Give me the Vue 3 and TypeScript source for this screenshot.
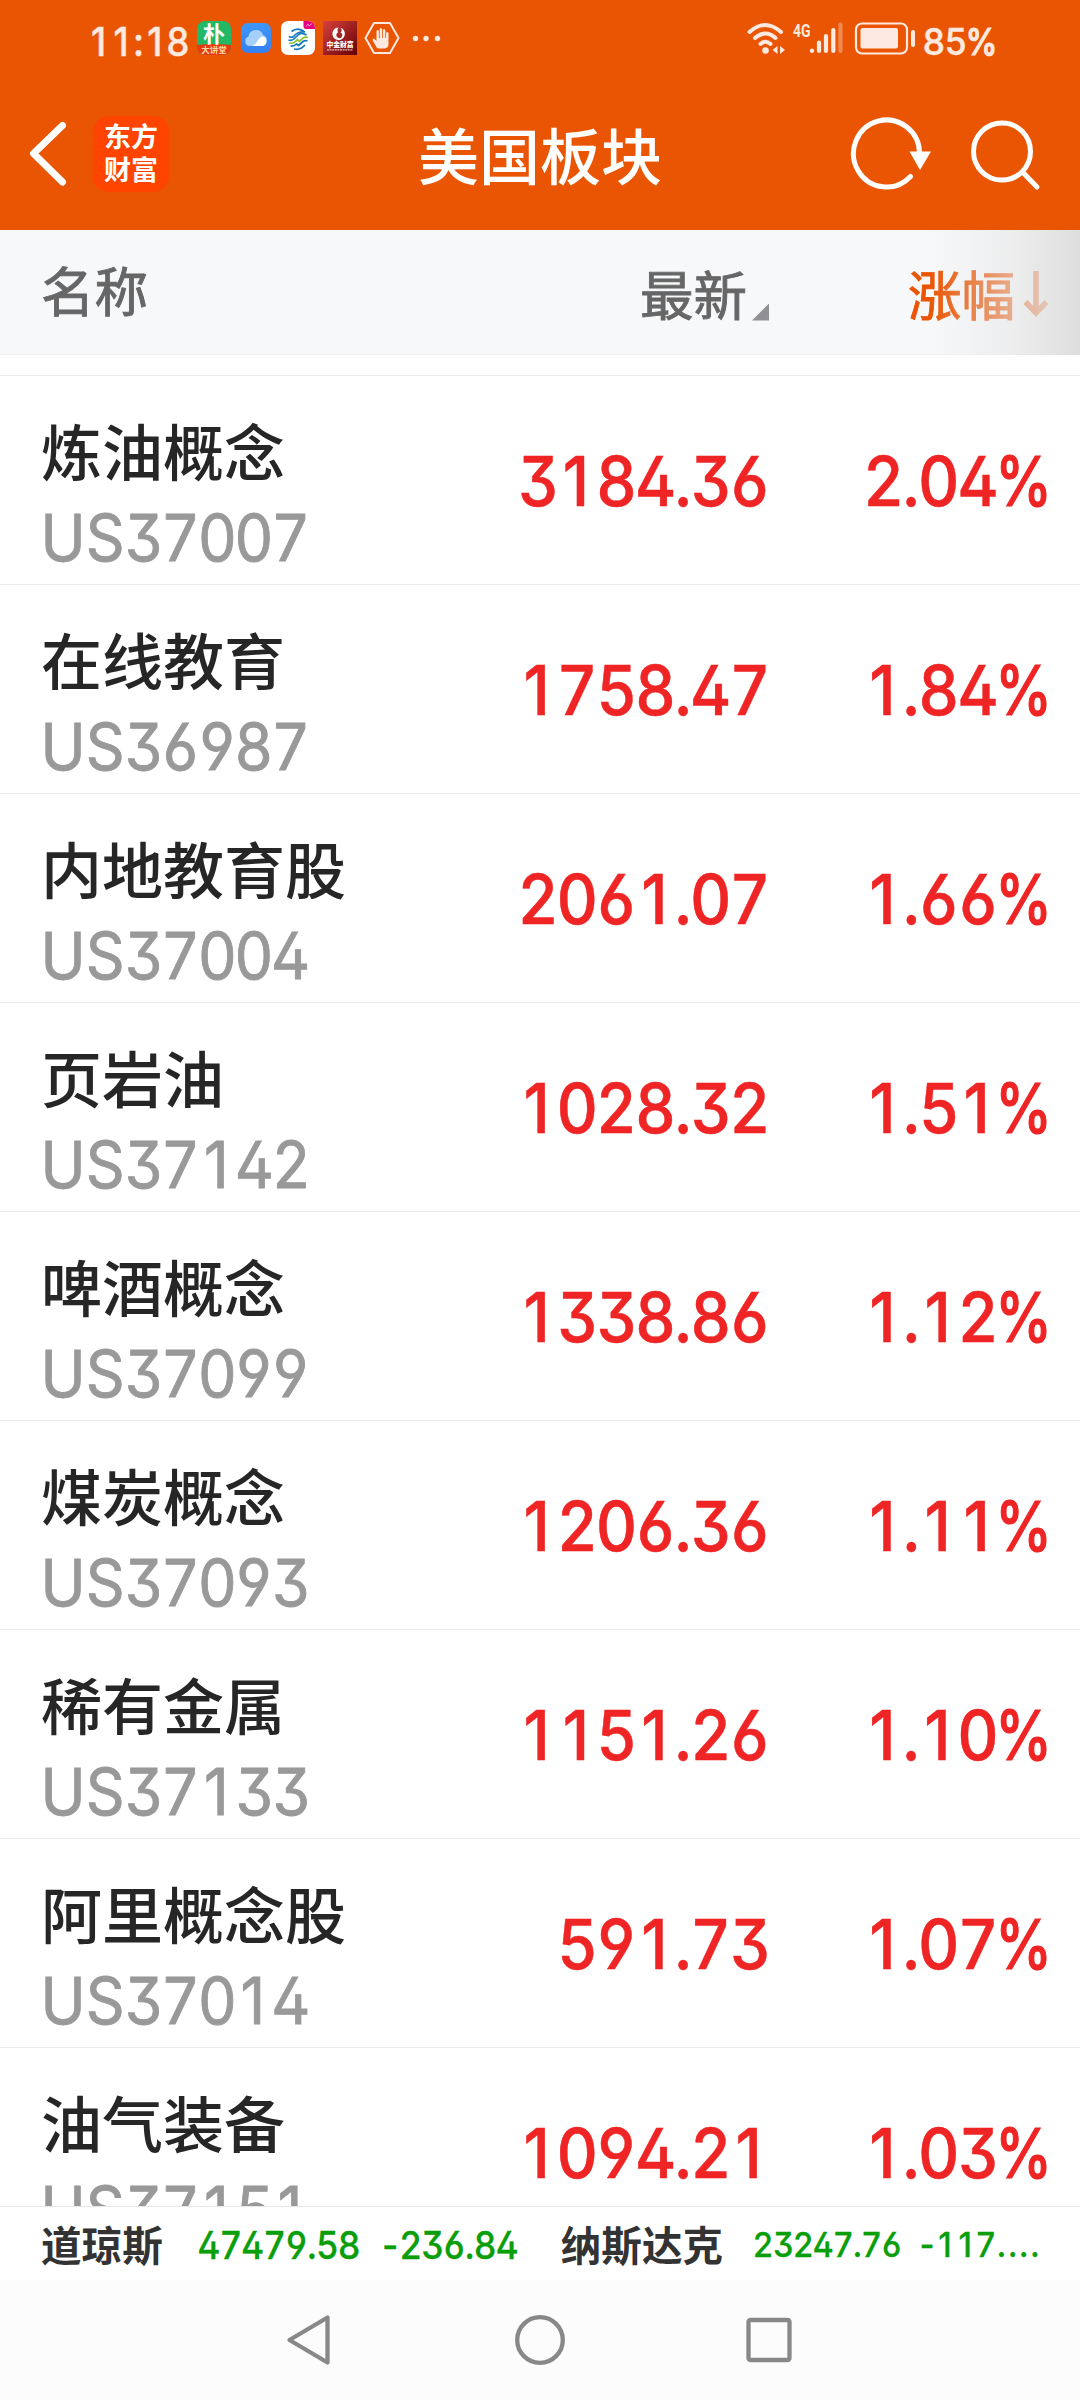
<script setup lang="ts">
import { h, type FunctionalComponent } from 'vue'

interface Sector {
  name: string
  code: string
  price: string
  change: string
}

const sectors: Sector[] = [
  { name: '炼油概念', code: 'US37007', price: '3184.36', change: '2.04%' },
  { name: '在线教育', code: 'US36987', price: '1758.47', change: '1.84%' },
  { name: '内地教育股', code: 'US37004', price: '2061.07', change: '1.66%' },
  { name: '页岩油', code: 'US37142', price: '1028.32', change: '1.51%' },
  { name: '啤酒概念', code: 'US37099', price: '1338.86', change: '1.12%' },
  { name: '煤炭概念', code: 'US37093', price: '1206.36', change: '1.11%' },
  { name: '稀有金属', code: 'US37133', price: '1151.26', change: '1.10%' },
  { name: '阿里概念股', code: 'US37014', price: '591.73', change: '1.07%' },
  { name: '油气装备', code: 'US37151', price: '1094.21', change: '1.03%' },
]

// Natural glyph advances of the figure font, in em.
const advance: Record<string, number> = {
  '0': 0.6456, '1': 0.4152, '2': 0.6163, '3': 0.6289, '4': 0.6563, '5': 0.6183, '6': 0.5928,
  '7': 0.5714, '8': 0.6295, '9': 0.5928, '.': 0.3033, '%': 0.9933, '-': 0.4625, ':': 0.3033,
  U: 0.7403, S: 0.6461,
}
// Cell widths for everything that is not a digit; digits share one width.
const cell: Record<string, number> = { '.': 0.25, '%': 0.825, '-': 0.54, ':': 0.316, U: 0.725, S: 0.662 }
const DIGIT = 0.6175

// Sets figures on an even grid while keeping the plain "1".
const Figures: FunctionalComponent<{ text: string }> = (props) =>
  h('span', { class: 'figures' }, Array.from(props.text).map((ch, i, all) => {
    let width = cell[ch] ?? DIGIT
    if (ch === '.' && (all[i + 1] === '.' || all[i - 1] === '.')) width = 0.344
    const side = (width - advance[ch]) / 2
    const shift = ch === '1' ? 0.02 : 0
    return h('span', {
      class: ch === '%' ? 'pct' : undefined,
      style: { marginLeft: `${(side - shift).toFixed(4)}em`, marginRight: `${(side + shift).toFixed(4)}em` },
    }, ch)
  }))
Figures.props = ['text']
</script>

<template>
  <div class="screen">
    <header class="top">
      <div class="status">
        <div class="clock"><div class="num"><Figures text="11:18" /></div></div>
        <svg class="tray" width="250" height="40" viewBox="0 0 250 40">
          <defs>
            <linearGradient id="cloudBg" x1="0" y1="0" x2="0" y2="1">
              <stop offset="0" stop-color="#3f97f8" /><stop offset="1" stop-color="#3580f2" />
            </linearGradient>
            <linearGradient id="fundBg" x1="0" y1="0" x2="1" y2="1">
              <stop offset="0" stop-color="#d9413f" /><stop offset="1" stop-color="#650004" />
            </linearGradient>
            <clipPath id="pu"><rect x="0" y="2" width="34" height="34" rx="8" /></clipPath>
            <clipPath id="mob"><rect x="84" y="2" width="34" height="34" rx="7" /></clipPath>
          </defs>
          <g clip-path="url(#pu)">
            <rect y="2" width="34" height="34" fill="#22b866" />
            <path d="M0 26Q17 24 34 26V36H0Z" fill="#e8380d" />
            <text x="17" y="23" text-anchor="middle" font-size="22" font-weight="700" fill="#fff">朴</text>
            <text x="17" y="34" text-anchor="middle" font-size="8.500" font-weight="700" fill="#ffd9a0">大讲堂</text>
          </g>
          <rect x="44" y="4" width="30" height="30" rx="7" fill="url(#cloudBg)" />
          <path d="M52 27a5 5 0 0 1-.5-9.500a7.500 7.500 0 0 1 14.500-1.500a5.800 5.800 0 0 1-.5 11Z" fill="#a5d0fb" />
          <path d="M55 27q3.500-1 5.500-5q2.500-4.500 5.500-4.500a5 5 0 0 1 0 9.500Z" fill="#fff" />
          <g clip-path="url(#mob)">
            <rect x="84" y="2" width="34" height="34" fill="#fff" />
            <path d="M106.500 2H118V10H109Q106.500 10 106.500 7Z" fill="#e4007f" />
            <path d="M109 7.500l2-2.500 1 2 3-2.500" fill="none" stroke="#ffb7dc" stroke-width=".8" />
          </g>
          <g fill="none" stroke-width="1.700" stroke-linejoin="round">
            <path d="M94.500 12.500q6.500-5 13 .5h-3.500q-3 0-5.500 2.500l-2 2q-2 1.500-4.500 0" stroke="#1577bd" />
            <path d="M91.500 21q3.500 1 6-1.500l4-4q3-2.500 8 .5" stroke="#1577bd" />
            <path d="M92 24q4 1 7-2l1.500-1.500l2 2l3.500-3.500q2-1.500 5-.5" stroke="#8cc32a" />
            <path d="M93.500 27q3.500 .5 6-2l2 1.500l4.500-4q2-1.500 4.500-.5M97 30q6 1.500 11-4" stroke="#1577bd" />
          </g>
          <rect x="126" y="2" width="34" height="34" fill="url(#fundBg)" />
          <path d="M141.500 8.500a6.300 6.300 0 1 0 5.500 3q-1.200-2.200-3.500-2.700q2.500 3 0 4.600a3 3 0 1 1-2.600.1q-1.200-2.500.6-5Z" fill="#fff" />
          <text x="143" y="28" text-anchor="middle" font-size="6.800" font-weight="900" fill="#fff">中金财富</text>
          <path d="M130 30.800h26" stroke="#e3b9b7" stroke-width="1.200" stroke-dasharray="2 .6" />
          <path d="M177 4h16l8.500 15l-8.500 15h-16l-8.500-15Z" fill="none" stroke="#fde9df" stroke-width="2" stroke-linejoin="round" />
          <path d="M180 29l-4-7q-1-2.500 1-2.500l2.500 2.500V12q1.200-2 2.400 0v7h.8V10q1.200-2 2.400 0v9h.8V11q1.200-2 2.400 0v8h.8V14q1.200-2 2.400 0V25q0 4-4 4.500h-5Z" fill="#fde9df" />
          <g fill="#fde9df"><circle cx="218.500" cy="19.500" r="2.700" /><circle cx="229" cy="19.500" r="2.700" /><circle cx="240.500" cy="19.500" r="2.700" /></g>
        </svg>
        <svg class="signals" width="174" height="40" viewBox="0 0 174 40">
          <g fill="none" stroke="#fde9df" stroke-width="4" stroke-linecap="round">
            <path d="M2.500 13q15.500-14 31.500 0M8 19q10.500-9 20.500 0M13.500 25q5-4.500 10 0" />
          </g>
          <circle cx="18.500" cy="31.500" r="3.300" fill="#fde9df" />
          <path d="M30.500 27v8l-5-4ZM33 27v8l5-4Z" fill="#fde9df" />
          <text class="net" x="46" y="17.500" textLength="17.500" lengthAdjust="spacingAndGlyphs">4G</text>
          <g stroke="#fde9df" stroke-width="4.200" stroke-linecap="round">
            <path d="M65 31.500v.5M72 23.500v8.500M79 17v15M86.300 11v21" />
            <path d="M93.500 5.500v26.500" opacity=".35" />
          </g>
          <rect x="109" y="4.500" width="51" height="30" rx="6" fill="none" stroke="#fde9df" stroke-width="2.200" />
          <rect x="113.500" y="9" width="37.500" height="20.500" rx="2" fill="#fde9df" />
          <path d="M166 13v13" stroke="#fde9df" stroke-width="4" stroke-linecap="round" />
        </svg>
        <div class="charge num"><Figures text="85%" /></div>
      </div>
      <div class="bar">
        <svg class="back" width="40" height="64" viewBox="0 0 40 64">
          <path d="M34.500 3.500L5.500 31.500L34.500 60" fill="none" stroke="#fff" stroke-width="7" stroke-linecap="round" stroke-linejoin="round" />
        </svg>
        <div class="logo"><span>东方</span><span>财富</span></div>
        <h1>美国板块</h1>
        <svg class="tools" width="200" height="80" viewBox="0 0 200 80">
          <g fill="none" stroke="#fff" stroke-width="5" stroke-linecap="round">
            <path d="M69.500 40A33 33.500 0 1 0 60.500 62.500" />
            <circle cx="152" cy="37.500" r="28.500" />
            <path d="M172.500 58L187 73" />
          </g>
          <path d="M59.500 37.500H81L70 56Z" fill="#fff" />
        </svg>
      </div>
    </header>

    <div class="head">
      <span class="h-name">名称</span>
      <span class="h-price">最新<i class="corner"></i></span>
      <span class="h-change">涨幅<svg width="26" height="48" viewBox="0 0 26 48"><path d="M13 1V42M2.500 32L13 43L23.500 32" fill="none" stroke="#ea5504" stroke-width="5.500" /></svg></span>
      <div class="shade"></div>
    </div>

    <main class="list">
      <div v-for="s in sectors" :key="s.code" class="row">
        <div class="ident">
          <div class="name">{{ s.name }}</div>
          <div class="code num"><Figures :text="s.code" /></div>
        </div>
        <div class="price num"><Figures :text="s.price" /></div>
        <div class="change num"><Figures :text="s.change" /></div>
      </div>
    </main>

    <div class="ticker">
      <b>道琼斯</b>
      <div class="dow num"><Figures text="47479.58" /><Figures text="-236.84" /></div>
      <b>纳斯达克</b>
      <div class="nas num"><Figures text="23247.76" /><Figures text="-117...." /></div>
    </div>

    <nav class="nav">
      <svg width="600" height="120" viewBox="240 0 600 120">
        <g fill="none" stroke="#888" stroke-width="4.300" stroke-linejoin="round">
          <path d="M327.500 37.500V82.500L289.500 60Z" />
          <circle cx="540" cy="60" r="22.800" />
          <rect x="748.500" y="40" width="41" height="40" rx="2" />
        </g>
      </svg>
    </nav>
  </div>
</template>

<style>
body { margin: 0; background: #fff; }
.figures > .pct { display: inline-block; transform: scaleX(.9); -webkit-text-stroke-width: 1.2px; }
</style>

<style scoped>
.screen {
  width: 1080px;
  height: 2400px;
  display: flex;
  flex-direction: column;
  overflow: hidden;
  background: #fff;
  font-family: "Noto Sans CJK SC", sans-serif;
}
.num {
  font-family: Inter, "Noto Sans CJK SC", sans-serif;
  font-feature-settings: "ss01", "cv02", "cv03", "cv04";
  font-weight: 500;
  white-space: nowrap;
  transform: scaleX(.92);
  transform-origin: left;
  -webkit-text-stroke: .5px currentColor;
}
.top { height: 230px; flex: none; background: #ea5504; color: #fff; }
.status { height: 80px; display: flex; align-items: center; color: #fde9df; }
.clock { width: 109px; padding-left: 88px; font-size: 39.500px; line-height: 80px; flex: none; margin-top: 3px; }
.clock .num { width: 109px; }
.tray { flex: none; margin-top: -2px; }
.signals { flex: none; margin: -2px 0 0 300px; }
.charge { margin: 3px 0 0 2px; font-size: 37px; line-height: 80px; transform: scaleX(.955); }
.net { font-family: Roboto, sans-serif; font-size: 18px; font-weight: 700; fill: #fde9df; }
.bar { height: 150px; display: flex; align-items: center; }
.back { margin: -3px 0 0 28px; flex: none; }
.logo {
  width: 76px; height: 76px; margin: -3px 0 0 25px; flex: none; border-radius: 16px; background: #ff4400;
  display: flex; flex-direction: column; align-items: center; justify-content: center;
  font-size: 27px; font-weight: 700; line-height: 33px; box-sizing: border-box; padding-bottom: 4px;
}
h1 { margin: -2px 0 0 249px; width: 244px; font-size: 61px; font-weight: 500; line-height: 80px; white-space: nowrap; }
.tools { margin: -2px 0 0 188px; flex: none; }
.head {
  height: 124px; flex: none; display: flex; align-items: center; position: relative;
  background: #f7f8fa; border-bottom: 1px solid #f2f2f2; color: #666; font-size: 53.500px;
  -webkit-text-stroke: .9px currentColor;
}
.h-name { width: 598px; padding-left: 41px; margin: -7px 1px 0 0; }
.h-price { width: 268px; display: flex; align-items: flex-end; }
.corner { width: 17px; height: 17px; margin: 0 0 10px 5px; background: #8f8f94; clip-path: polygon(100% 0, 100% 100%, 0 100%); }
.h-change { color: #ea5504; display: flex; align-items: center; gap: 8px; }
.h-change svg { margin-top: 4px; }
.shade {
  position: absolute; top: 0; right: 0; width: 150px; height: 125px;
  background: linear-gradient(90deg, rgba(240,240,240,0), rgba(230,230,230,.6) 55%, #dedede);
}
.list { height: 1831px; margin-top: 20px; flex: none; overflow: hidden; }
.row { height: 209px; box-sizing: border-box; border-top: 1px solid #ebebeb; display: flex; }
.ident { width: 460px; padding-left: 41px; box-sizing: border-box; }
.name { margin-top: 40px; font-size: 61px; font-weight: 500; line-height: 68px; color: #262626; }
.code { margin-top: 20px; font-size: 64px; font-weight: 400; line-height: 68px; color: #999; transform: scaleX(.947); -webkit-text-stroke: .9px currentColor; }
.price, .change { font-size: 69px; line-height: 211px; color: #ef2424; text-align: right; transform-origin: right; }
.price { width: 309.500px; }
.change { width: 280px; }
.ticker {
  height: 74px; box-sizing: border-box; flex: none; display: flex; align-items: center;
  border-top: 1px solid #e6e6e6; padding-left: 41px; color: #333;
}
.ticker b { font-size: 40.600px; font-weight: 700; white-space: nowrap; flex: none; }
.ticker .num { color: #0a9e0a; display: flex; flex: none; margin-top: 3px; -webkit-text-stroke: .3px currentColor; }
.ticker .dow { font-size: 38px; margin-left: 35px; width: 363px; gap: 22px; transform: scaleX(.932); }
.ticker .nas { font-size: 34.500px; margin-left: 30px; gap: 17.500px; transform: scaleX(.942); margin-top: 2px; }
.nav { height: 120px; flex: none; background: #fcfcfc; display: flex; justify-content: center; }
</style>
